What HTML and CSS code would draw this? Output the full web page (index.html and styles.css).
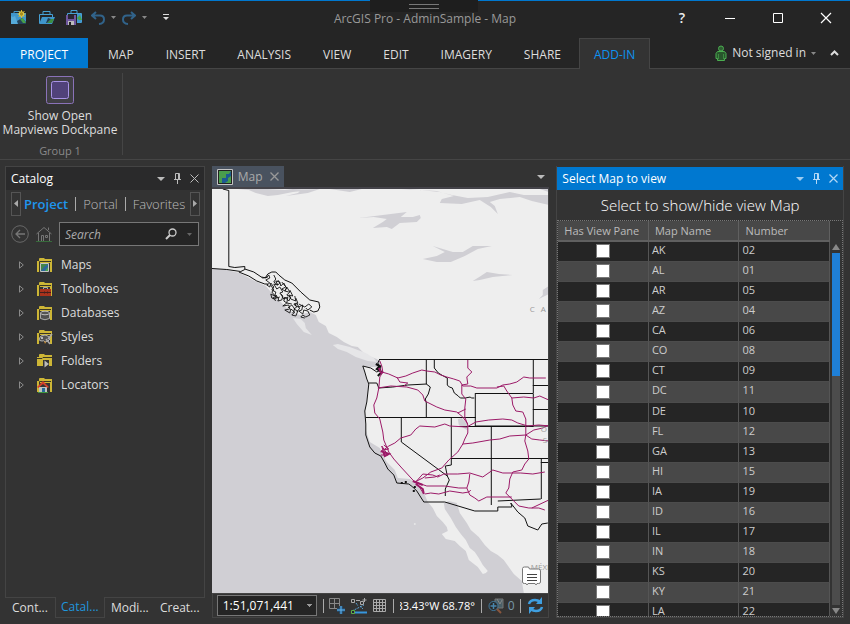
FILE: index.html
```html
<!DOCTYPE html>
<html lang="en">
<head>
<meta charset="utf-8">
<title>ArcGIS Pro - AdminSample - Map</title>
<link rel="stylesheet" href="styles.css">
</head>
<body>
<div class="window">
  <header class="titlebar">
    <div class="grip"></div>
    <div class="quick">
      <button aria-label="New project"><svg width="17" height="16" viewBox="0 0 17 16"><path d="M4 4V1.500h6V4" fill="none" stroke="#3f96cc"/><path d="M1 3h15v11H1z" fill="#3f96cc"/><path d="M1 6l2 1 2-1 3 8H1z" fill="#56abd9"/><path d="M7 11l5-3 4 4v2H8z" fill="#24435a"/><path d="M10 9l3-1 3 5h-3z" fill="#48a04a"/><path d="M11.500 0v8M7.500 4h8M8.500 1l6 6M14.500 1l-6 6" stroke="#d7b52e"/><circle cx="11.500" cy="4" r="2.300" fill="#a88d21" stroke="#ead044"/></svg></button>
      <button aria-label="Open project"><svg width="17" height="16" viewBox="0 0 17 16"><path d="M5 4V1.500h7V4M1.500 13V4.500h13V7" fill="none" stroke="#46a0d4"/><path d="M1 14l3-7h13l-3 7z" fill="#3f96cc"/><path d="M9 13l4-4h3l-2 4z" fill="#3b8f42"/><path d="M10 8l3 1-4 4H8z" fill="#263c4c"/></svg></button>
      <button aria-label="Save project"><svg width="18" height="17" viewBox="0 0 18 17"><path d="M6 4V1.500h6V4M2.500 8V4.500h14v9H12" fill="none" stroke="#46a0d4"/><path d="M12 5h4v8h-4z" fill="#3f96cc"/><path d="M12 9l3-3 2 5h-3z" fill="#48a04a"/><path d="M1 6h10v10H1z" fill="#6f579e"/><path d="M3 6h6v4H3z" fill="#292632"/><path d="M3 12h6v4H3z" fill="#bbb"/><path d="M4 13h2v3H4z" fill="#222"/></svg></button>
      <button aria-label="Undo"><svg width="14" height="14" viewBox="0 0 14 14"><path d="M5 1L1 4.500 5 8M1 4.500h8q4 0 4 4t-5 4.500" fill="none" stroke="#31638a" stroke-width="2"/></svg></button>
      <svg class="tri" width="5" height="3" viewBox="0 0 5 3"><path d="M0 0h5L2.500 3z"/></svg>
      <button aria-label="Redo"><svg width="14" height="14" viewBox="0 0 14 14"><path d="M9 1l4 3.500L9 8M13 4.500H5q-4 0-4 4T6 13" fill="none" stroke="#31638a" stroke-width="2"/></svg></button>
      <svg class="tri" width="5" height="3" viewBox="0 0 5 3"><path d="M0 0h5L2.500 3z"/></svg>
      <button class="customize" aria-label="Customize"><svg width="6" height="7" viewBox="0 0 6 7"><path d="M0 0h6v1H0zM0 3h6L3 6z" fill="#ddd"/></svg></button>
    </div>
    <h1>ArcGIS Pro - AdminSample - Map</h1>
    <div class="winbtns">
      <button class="help" aria-label="Help">?</button>
      <button aria-label="Minimize"><svg width="12" height="12" viewBox="0 0 12 12"><path d="M1 6.500h10" stroke="#fff"/></svg></button>
      <button aria-label="Maximize"><svg width="12" height="12" viewBox="0 0 12 12"><path d="M1.500 1.500h9v9h-9z" fill="none" stroke="#fff"/></svg></button>
      <button aria-label="Close"><svg width="12" height="12" viewBox="0 0 12 12"><path d="M1 1l10 10M11 1L1 11" stroke="#fff" stroke-width="1.200"/></svg></button>
    </div>
  </header>

  <nav class="ribbon-tabs">
    <button class="project">PROJECT</button>
    <button>MAP</button><button>INSERT</button><button>ANALYSIS</button><button>VIEW</button><button>EDIT</button><button>IMAGERY</button><button>SHARE</button>
    <button class="active">ADD-IN</button>
    <div class="account">
      <svg width="12" height="17" viewBox="0 0 12 17"><circle cx="6" cy="3.500" r="2.500" fill="#2f5d33" stroke="#4bae50"/><path d="M2.500 6.500h7l1.500 2v5h-1.500v2h-7v-2H1v-5z" fill="#28562c" stroke="#4bae50"/><path d="M3.500 9v5M8.500 9v5" stroke="#3d8a42"/></svg>
      <button>Not signed in</button>
      <svg class="tri" width="5" height="3" viewBox="0 0 5 3"><path d="M0 0h5L2.500 3z"/></svg>
      <svg class="chev" width="9" height="6" viewBox="0 0 9 6"><path d="M1 5l3.500-3.500L8 5" fill="none" stroke="#ddd" stroke-width="2"/></svg>
    </div>
  </nav>

  <section class="ribbon">
    <div class="group">
      <button class="big">
        <svg width="28" height="28" viewBox="0 0 28 28"><rect x=".5" y=".5" width="27" height="27" rx="2" fill="#403f44" stroke="#8a72b8"/><rect x="5.500" y="5.500" width="17" height="17" rx="2" fill="#51427a" stroke="#a993e6"/></svg>
        <span>Show Open<br>Mapviews Dockpane</span>
      </button>
      <span class="gname">Group 1</span>
    </div>
  </section>

  <main>
    <aside class="catalog">
      <div class="pane">
        <div class="pane-head"><h2>Catalog</h2>
          <svg width="8" height="4" viewBox="0 0 8 4"><path d="M0 0h8L4 4z" fill="#bbb"/></svg>
          <svg width="9" height="11" viewBox="0 0 9 11"><path d="M2.500 6V.5h4V6M1 6.500h7M4.500 7v4M5.500 1v5" fill="none" stroke="#bbb"/></svg>
          <svg width="9" height="9" viewBox="0 0 9 9"><path d="M.5.5l8 8M8.500.5l-8 8" stroke="#bbb"/></svg>
        </div>
        <div class="cat-tabs">
          <button class="arrow" aria-label="Scroll left"><svg width="4" height="7" viewBox="0 0 4 7"><path d="M4 0v7L0 3.500z" fill="#aaa"/></svg></button>
          <a href="#" class="on">Project</a><a href="#">Portal</a><a href="#">Favorites</a>
          <button class="arrow" aria-label="Scroll right"><svg width="4" height="7" viewBox="0 0 4 7"><path d="M0 0v7l4-3.500z" fill="#aaa"/></svg></button>
        </div>
        <div class="cat-search">
          <svg width="18" height="18" viewBox="0 0 18 18"><circle cx="9" cy="9" r="8.300" fill="none" stroke="#686868"/><path d="M14 9H5M9 5L5 9l4 4" fill="none" stroke="#777" stroke-width="1.300"/></svg>
          <svg width="16" height="16" viewBox="0 0 16 16"><path d="M.5 8L8 1.500 15.500 8M2.500 7v8M13.500 7v8M12.500 4V1.500" fill="none" stroke="#777"/><path d="M5.500 15V9.500h2V15M9.500 9.500h2v2h-2z" fill="none" stroke="#777"/><path d="M0 15.500h16" stroke="#376b3b"/></svg>
          <label class="search"><input type="text" placeholder="Search" aria-label="Search">
            <svg width="12" height="12" viewBox="0 0 12 12"><circle cx="7.500" cy="4.500" r="3.500" fill="none" stroke="#ccc" stroke-width="1.300"/><path d="M5 7L1 11" stroke="#ccc" stroke-width="2"/></svg>
            <svg width="5" height="3" viewBox="0 0 5 3"><path d="M0 0h5L2.500 3z" fill="#666"/></svg></label>
        </div>
        <svg class="defs" width="0" height="0"><defs>
          <symbol id="fold" viewBox="0 0 16 16"><path d="M0 15V4h2V2q0-1 1-1h4l1 1h7v13h-2V6H3v9z" fill="#cdb636"/><path d="M2.500 15V4.500H14" fill="none" stroke="#3a3726"/></symbol>
          <symbol id="exp" viewBox="0 0 5 8"><path d="M.5.800v6.400L4.300 4z" fill="none" stroke="#8a8a8a"/></symbol></defs></svg>
        <ul class="tree">
          <li><svg class="ex"><use href="#exp"/></svg><svg class="ic" viewBox="0 0 16 16"><use href="#fold"/><path d="M3.500 6.500h8v8h-8z" fill="#42844a" stroke="#c4c4c4"/><path d="M4 14l3-4 4-3v7z" fill="#2b669b"/><path d="M8 14l3-4v4z" fill="#49a34d"/></svg>Maps</li>
          <li><svg class="ex"><use href="#exp"/></svg><svg class="ic" viewBox="0 0 16 16"><use href="#fold"/><path d="M6.500 9V6.500h4V9" fill="none" stroke="#aaa"/><path d="M3 8h11v7H3z" fill="#a8321c"/><path d="M3 11.500h11M7.500 10.500v2M10.500 10.500v2" stroke="#42201c"/></svg>Toolboxes</li>
          <li><svg class="ex"><use href="#exp"/></svg><svg class="ic" viewBox="0 0 16 16"><use href="#fold"/><path d="M3.500 8v5.500q4.500 2.500 9 0V8" fill="#505050" stroke="#aaa"/><ellipse cx="8" cy="8" rx="4.500" ry="1.800" fill="#555" stroke="#bbb"/></svg>Databases</li>
          <li><svg class="ex"><use href="#exp"/></svg><svg class="ic" viewBox="0 0 16 16"><use href="#fold"/><path d="M2 10q1-4 6-4 5 1 5 4-2 3-5 3-1-2-3-1-3 0-3-2z" fill="#525252" stroke="#b3b3b3"/><path d="M15 5l-4 5M9 10l4 5" stroke="#aaa" stroke-width="1.500"/><path d="M7 12l2 1-1 2z" fill="#d4902e"/><circle cx="5" cy="9" r="1" fill="#ddd"/></svg>Styles</li>
          <li><svg class="ex"><use href="#exp"/></svg><svg class="ic" viewBox="0 0 16 16"><path d="M0 13V4h2V2q0-1 1-1h4l1 1h7v11z" fill="#cdb636"/><path d="M0 5.500h5l1-1h9" fill="none" stroke="#3a3726"/><path d="M6 7h6v9H6z" fill="#333"/><path d="M7.500 7.500v7l4.500-3.500z" fill="#bbb"/></svg>Folders</li>
          <li><svg class="ex"><use href="#exp"/></svg><svg class="ic" viewBox="0 0 16 16"><use href="#fold"/><path d="M2 10h8v5H2z" fill="#bfc2bf"/><path d="M5 11h3v4H5z" fill="#27699a"/><path d="M0 10l6-6 6 6-1.500 1L6 7l-4.500 4z" fill="#d3412c"/><path d="M1 15.500h10" stroke="#3f963f"/></svg>Locators</li>
        </ul>
      </div>
      <div class="bottom-tabs"><button>Cont...</button><button class="on">Catal...</button><button>Modi...</button><button>Creat...</button></div>
    </aside>

    <section class="mapview">
      <div class="doc-tabs">
        <div class="doc-tab"><svg width="16" height="16" viewBox="0 0 16 16"><path d="M.5.5h15v15H.5z" fill="#222" stroke="#c5c5c5"/><path d="M2 2h12v12H2z" fill="#4a9e4c"/><path d="M14 2v5l-3 2v3l-3 2H5V9h4V5h3z" fill="#1d5a91"/><path d="M10 14l4-4v4z" fill="#4a9e4c"/></svg><span>Map</span><button aria-label="Close map"><svg width="9" height="9" viewBox="0 0 9 9"><path d="M.5.5l8 8M8.500.5l-8 8" stroke="#999" stroke-width="1.300"/></svg></button></div>
        <svg width="8" height="4" viewBox="0 0 8 4"><path d="M0 0h8L4 4z" fill="#bbb"/></svg>
      </div>
      <div class="canvas">
        <svg class="map" viewBox="212 189 337 404" preserveAspectRatio="xMidYMid slice" role="img" aria-label="Map of western North America">
          <path d="M212 189h337v404H212z" fill="#eee"/>
          <g fill="#d0cfd4">
            <path d="M212 268L227 270 240 273 255 281 266 286 272 293 280 301 290 311 300 315 310 312 316 315 319 322 326 326 329 333 337 337 344 342 352 346 358 347 366 355 377 359 381 362 379 367 370 367 363 366 365 372 367 380 369 384 367 400 365 411 366 430 370 442 380 448 383 455 387 462 395 470 398 478 410 479 417 484 425 495 428 502 433 508 437 516 443 522 447 527 448 531 442 534 446 539 455 541 460 546 466 551 469 560 478 567 483 574 486 573 488 571 483 565 479 558 475 552 470 548 466 540 461 534 456 527 451 518 445 509 444 503 449 501 457 503 460 513 467 523 471 530 479 537 485 545 491 551 498 555 504 560 509 567 514 574 522 581 524 593H212z"/>
            <path d="M238 189h30l17 1 8-1 20 1-20 2-15 3-10 1-12-3-7-3zM286 196l12-3 4-3 18-1-12 4zM330 189h32l-12 3zM365 189h45l30 3 12 3 16 3 20-1 22-5 14 3 25 0v10l-17-4-12-4-20 2-10 3 5 4 3 8-7-7-11-7-18 4-22-1 2-4 12-3-17-5-35-2zM540 189l9 3v-3z"/>
            <path d="M359 218l24-3 24-3-6 5 12 0 7-2 1 3-4 4-17 1-8 6-5-2-14 1 10-6 4-3-13-2zM423 259l14-3 8-4-12-6 20 6h10l10-6 19 0-14 3-13 7-14 6h-14zM473 281l8-5 6-4 12 2 14 1-20 2-13 3zM549 286l-6 4v5l-4 4 10-5zM458 419l4-1 7 8-2 4-8-5z"/>
          </g>
          <g fill="#e6e6e8"><path d="M293 318l8 1 4 4 1 5 6 7-8-3-7-8zM333 345l5-1 12 3 16 6 8 5 3 4-9-1-12-4-9-5-9-3z"/><circle cx="415" cy="524" r="1"/></g>
          <g fill="none" stroke="#111" stroke-width="1">
            <path d="M223 189l6 1.500v76l6 1 10-1v3l-4 2-14-2-15-1M245 269l9 3 9 6 5-1M239 272l10 4 8 5 8 3h3M266 277l2-3 4-2h4l3 3 6 5 7 3 9 9 9 8 9 2 1 5-2 4-4 1-4-2"/>
            <path stroke-width=".9" d="M262 277l4 1 3-3 1 3-4 2 4 3-3 2 3 2 1-4 3 4-2 3 4 2-1 4-4-2 1 4 4 1 0-4 3 4-1 2 4-1 1-4-3-3 3-1-3-5-3 2-3-5 4 1-2-4 4 1 1 4 3-3 2 4-4 2 3 2 2-4 3 5-3 3 4 2-2 4-4-4-1 4 3 2-4 3 6-1 1 4-5 1 5 3 1-4 4 3-3 3 4 1 2-5-4-2 3-2-3-3 3-1 2 4 4-2-1 5-3 1 4 3 1-4 4 1 2 4-4 2-3-2-2 2 4 1M274 275l2 4-2 3 4 3 2-2-2-3M271 285l3 5-2 2 5 6 3-1M282 282l5 6-2 3 4 1M290 290l3 6-4-1 2 4 5 2-1-5M281 294l3 5 4-2-1 6 5 1M296 298l2 5-3 2 5 3-3 4M288 308l4-3 3 4-2 4M277 296l-4 2 3 3M299 304l6 3 4-3 3 3-4 3-2-2"/>
            <path d="M380 359.500h169M380 359l-2 4 3 7-4 2-6-4-8-2 2 6 2 7 2 5-2 18-2 9 1 13 0 11 4 12 5 6 6 3 4 7 3 6 6 6 3 8 12 1 4 3 4 4 7 11h21l30 9h23v-4h14v-1l-1-3 7 9 7 6 3 8 10 4 4-6 6-1M498 501l43-2M369 383h8l2 5 14-1 15-2 19-1M426.500 359v25l4 3-2 7-3 5 1 4v14M366 417.500h110M434.500 359v9l4 5 5 3 4 2v7l2 2 3 1 2 5 4 3 2 2h5l5-1 1 1h3M475.500 393.500h58v33h-74M533.500 359v34M533 385.500h16M533 409.500h16M475.500 393v33h74M401.500 417v25l46 34M451.500 417v48l-6 1 2 10 2 4-4 9v7M491.500 426v79M451 458.500h98M541.500 458v41M541 462.500h8"/>
            <path stroke-width="2" d="M376 364l4 2-3 3 5 3-4 4M378 370l3-4M401 483h2M405 482h2M414 487h2M413 491h2"/>
          </g>
          <g fill="none" stroke="#9c1a68" stroke-width="1">
            <path d="M380 361l2 5 1 6-3 5-1 11-2 10-3 7 1 8 5 6 3 13 1 8 5 12 5 7 8 9 12 13 5 5 5 8M382 372l7 2 9 4 8-2 7-3 9-3 5 1 8 1 6 3 6 2 7 2 6 2 3 5 8 0 6 2 20 0 6-3 7-1 7-2 7-5 6 1h16M497 387l7-1 3 5 5 7 12-1 10 1 6-2 9 4M512 398l1 7 3 6 7 1 3 7 0 7 0 9-1 6 3 10 1 8-4 5-3 6-9 2-3 7-1 9-3 5 7 7 6 6 10 2 10 0 6 2M532 508l17-8M468 360l0 8 4 4-5 5 1 7-6 1 0 9 4 5-1 9 0 9 3 8 0 8-3 6-2 5-5 8-9 8-7 8-11 4-8 6-8 4M378 388l13-2 16 1 11 3 5 5 2 6 12 6 8 3 12 2 6 5 5 7M397 377l3 5 8 1-4 3M458 413l8-4"/>
            <path d="M381 452l8-6 6-3 6-5 10-3 5-6 4-3 15 1 10-3 5 2 17 1 9-5 13-2 14-1 9 1 6 3 10 3 11-1 11 1M463 444l10-1 17-3 10-1 10-3 16-1 6 4 8 1 9 1M526 435l8-5 9-2 6-3M415 483l8-9 10 1 5 2 6-3 14 0 12-1 13 4 10-7 10 3 18 0 12 1 12-2M415 482l12 4 18 0 14 2 8 0 3 7 5 3 4 3 8-4 25 0M425 494l6-1 8 1 11-3 13 2 6-1 2-2M467 488l2-6 1-8M425 478l10-1 5-2M384 445l5 4-6 1-1-4 6 9-7 0"/>
            <path stroke-width="2" d="M381 451l8 3-4 2-2-5M379 368l3 6M413 481l10 4M416 484l7 5 1 5"/>
          </g>
          <g class="maplabels"><text x="530" y="312">C</text><text x="541" y="312">A</text><text x="541" y="432">O</text><text x="543" y="443">S</text><text x="531" y="570">MÉXI</text></g>
        </svg>
        <button class="note" aria-label="Map notes"><svg width="21" height="20" viewBox="0 0 21 20"><path d="M1.500 2.500q0-1.500 2-1.500h4l1 2h9q2 0 2 2v11q0 1.500-2 1.500H16l-1 1.500-1-1.500H7L6 19l-1-1.500H3.500q-2 0-2-1.500z" fill="#fff" stroke="#777"/><path d="M6 8.500h10M6 11.500h10M6 14.500h10" stroke="#444"/></svg></button>
      </div>
      <div class="status">
        <select aria-label="Scale"><option>1:51,071,441</option></select>
        <i></i>
        <svg width="16" height="16" viewBox="0 0 16 16"><path d="M.5.5h10v10H.5zM5.500 .5v10M.5 5.500h10" fill="none" stroke="#888"/><path d="M8 8h8v8H8z" fill="#333"/><path d="M12 8v8M8 12h8" stroke="#1d5b8d" stroke-width="3"/><path d="M12 8v8M8 12h8" stroke="#6bb5e8"/></svg>
        <svg width="16" height="16" viewBox="0 0 16 16"><path d="M.5 1.500h3v3h-3zM9.500 3.500h3v3h-3zM5 2.500h4M13.500 0v4M11.500 2h4" fill="none" stroke="#aaa"/><path d="M1 13L13 7M5 5l2 3M9 8l3 3" stroke="#5aa5da" stroke-dasharray="2 1"/><path d="M3 14.500h13" stroke="#3796dd" stroke-width="2"/><path d="M.5 12.500h3v3h-3z" fill="#223" stroke="#5fae46"/></svg>
        <svg width="14" height="14" viewBox="0 0 14 14"><path d="M.5.500h12v12H.500zM3.500 0v13M6.500 0v13M9.500 0v13M0 3.500h13M0 6.500h13M0 9.500h13" fill="none" stroke="#aaa"/></svg>
        <i></i>
        <output>33.43°W 68.78°</output>
        <i></i>
        <button class="sel"><svg width="16" height="16" viewBox="0 0 16 16"><path d="M7 1h8v9H7z" fill="#4b6068" stroke="#777"/><path d="M9 1l3 5 2-4" stroke="#888" fill="none"/><circle cx="5.500" cy="8" r="4.500" fill="#292929" stroke="#427a9e"/><path d="M5.500 5v6M2.500 8h6" stroke="#4986ad" stroke-width="1.500"/><path d="M9 11l4 4" stroke="#8a563d" stroke-width="2"/></svg>0</button>
        <i></i>
        <button aria-label="Refresh"><svg width="17" height="17" viewBox="0 0 17 17"><path d="M2 7q1-4 6-4 3 0 5 2M15 10q-1 4-6 4-3 0-5-2" fill="none" stroke="#3f9fe0" stroke-width="2.500"/><path d="M15 0v7H9zM2 17v-7h6z" fill="#3f9fe0"/></svg></button>
      </div>
    </section>

    <section class="select-pane">
      <div class="pane-head"><h2>Select Map to view</h2>
        <svg width="8" height="4" viewBox="0 0 8 4"><path d="M0 0h8L4 4z" fill="#9dccf1"/></svg>
        <svg width="9" height="11" viewBox="0 0 9 11"><path d="M2.500 6V.5h4V6M1 6.500h7M4.500 7v4M5.500 1v5" fill="none" stroke="#b3d8f5"/></svg>
        <svg width="9" height="9" viewBox="0 0 9 9"><path d="M.5.5l8 8M8.500.5l-8 8" stroke="#b3d8f5" stroke-width="1.200"/></svg>
      </div>
      <h3>Select to show/hide view Map</h3>
      <div class="grid">
        <div class="rows">
        <table>
          <thead><tr><th>Has View Pane</th><th>Map Name</th><th>Number</th></tr></thead>
          <tbody>
            <tr><td><input type="checkbox" aria-label="AK"></td><td>AK</td><td>02</td></tr>
            <tr><td><input type="checkbox" aria-label="AL"></td><td>AL</td><td>01</td></tr>
            <tr><td><input type="checkbox" aria-label="AR"></td><td>AR</td><td>05</td></tr>
            <tr><td><input type="checkbox" aria-label="AZ"></td><td>AZ</td><td>04</td></tr>
            <tr><td><input type="checkbox" aria-label="CA"></td><td>CA</td><td>06</td></tr>
            <tr><td><input type="checkbox" aria-label="CO"></td><td>CO</td><td>08</td></tr>
            <tr><td><input type="checkbox" aria-label="CT"></td><td>CT</td><td>09</td></tr>
            <tr><td><input type="checkbox" aria-label="DC"></td><td>DC</td><td>11</td></tr>
            <tr><td><input type="checkbox" aria-label="DE"></td><td>DE</td><td>10</td></tr>
            <tr><td><input type="checkbox" aria-label="FL"></td><td>FL</td><td>12</td></tr>
            <tr><td><input type="checkbox" aria-label="GA"></td><td>GA</td><td>13</td></tr>
            <tr><td><input type="checkbox" aria-label="HI"></td><td>HI</td><td>15</td></tr>
            <tr><td><input type="checkbox" aria-label="IA"></td><td>IA</td><td>19</td></tr>
            <tr><td><input type="checkbox" aria-label="ID"></td><td>ID</td><td>16</td></tr>
            <tr><td><input type="checkbox" aria-label="IL"></td><td>IL</td><td>17</td></tr>
            <tr><td><input type="checkbox" aria-label="IN"></td><td>IN</td><td>18</td></tr>
            <tr><td><input type="checkbox" aria-label="KS"></td><td>KS</td><td>20</td></tr>
            <tr><td><input type="checkbox" aria-label="KY"></td><td>KY</td><td>21</td></tr>
            <tr><td><input type="checkbox" aria-label="LA"></td><td>LA</td><td>22</td></tr>
          </tbody>
        </table>
        </div>
        <div class="scroll">
          <svg width="8" height="6" viewBox="0 0 8 6"><path d="M0 6h8L4 0z" fill="#888"/></svg>
          <div class="track"><div class="thumb"></div></div>
          <svg width="8" height="6" viewBox="0 0 8 6"><path d="M0 0h8L4 6z" fill="#888"/></svg>
        </div>
      </div>
    </section>
  </main>
</div>
</body>
</html>
```
FILE: styles.css
```css
* { box-sizing: border-box; }
body { margin: 0; background: #333; color: #ddd; font: 12px/16px "Open Sans", "Noto Sans", sans-serif; }
button { background: none; border: 0; padding: 0; margin: 0; color: inherit; font: inherit; display: flex; align-items: center; justify-content: center; white-space: nowrap; }
h1, h2, h3, ul { margin: 0; padding: 0; font-weight: 400; font-size: 12px; }
svg { display: block; flex: none; }
a { color: inherit; text-decoration: none; }

.window { height: 100vh; display: flex; flex-direction: column; }

.titlebar { position: relative; flex: none; height: 38px; display: grid; grid-template-columns: 1fr auto 1fr; align-items: center; background: #252525; border-top: 1px solid #0078d0; padding: 0 18px 4px; }
.titlebar h1 { color: #999; padding-top: 2px; }
.grip { position: absolute; top: -1px; left: calc(50% - 55px); width: 108px; height: 12px; background: #1e1e1e; padding-top: 4px; }
.grip::after { content: ""; display: block; margin: 0 auto; width: 30px; height: 3px; border: solid #777; border-width: 1px 0; }
.quick { display: flex; align-items: center; gap: 6px; margin-left: -11px; }
.quick button:nth-of-type(-n+3) { width: 22px; }
.tri { fill: #888; }
.customize { margin-left: 10px; }
.winbtns { display: flex; justify-content: flex-end; gap: 36px; }
.help { width: 12px; font-size: 14px; font-weight: 600; color: #eee; }

.ribbon-tabs { flex: none; height: 31px; display: flex; background: #252525; border-bottom: 1px solid #454545; }
.ribbon-tabs > button { padding: 3px 16px 0; }
.ribbon-tabs > .project { background: #0078d0; color: #fff; padding: 3px 20px 0; margin-right: 4px; }
.ribbon-tabs > .active { background: #333; border: 1px solid #454545; border-bottom: 0; color: #0d93f2; margin: 0 0 -1px 2px; padding: 2px 14px 0; }
.account { margin-left: auto; display: flex; align-items: center; gap: 5px; padding-right: 11px; }
.account button { line-height: 28px; }
.chev { margin-left: 9px; }

.ribbon { flex: none; height: 91px; border-bottom: 1px solid #454545; padding: 4px 0; display: flex; }
.group { width: 123px; border-right: 1px solid #454545; display: flex; flex-direction: column; align-items: center; padding: 3px 2px 0 0; }
.big { flex-direction: column; gap: 5px; line-height: 14px; }
.gname { color: #8a8a8a; font-size: 11px; margin-top: 6px; }

main { flex: 1; min-height: 0; display: grid; grid-template-columns: 200fr 338fr 288fr; gap: 7px; padding: 6px 6px 6px 5px; }
main > * { min-width: 0; min-height: 0; display: flex; flex-direction: column; }
.pane-head { flex: none; height: 24px; display: flex; align-items: center; gap: 8px; padding: 0 5px; background: #2a2a2b; color: #fff; }
.pane-head h2 { flex: 1; }

.pane { flex: 1; min-height: 0; border: 1px solid #444; }
.pane .pane-head { height: 23px; }
.cat-tabs { height: 25px; display: flex; align-items: center; margin: 1px 4px 0 5px; font-size: 13px; }
.cat-tabs a { padding: 0 7px; border-left: 1px solid #aaa; line-height: 14px; color: #bbb; font-weight: 300; }
.cat-tabs a.on { border: 0; padding-left: 3px; color: #1f96ee; font-weight: 600; }
.cat-tabs a:nth-of-type(3) { flex: 1; min-width: 0; padding-right: 0; }
.arrow { flex: none; width: 10px; height: 24px; border: 1px solid #555; }
.cat-search { display: flex; align-items: center; gap: 7px; padding: 6px 5px; }
.search { flex: 1; min-width: 0; height: 24px; display: flex; align-items: center; gap: 10px; background: #252525; border: 1px solid #777; padding: 0 6px 0 5px; }
.search input { flex: 1; min-width: 0; background: none; border: 0; padding: 0; font: italic 12px "Open Sans", sans-serif; color: #ddd; }
.search input::placeholder { color: #aaa; opacity: 1; }
.defs { position: absolute; }
.tree { list-style: none; padding-top: 1px; }
.tree li { height: 24px; display: flex; align-items: center; padding-left: 13px; }
.ex { width: 5px; height: 8px; margin-right: 13px; }
.ic { width: 16px; height: 16px; margin-right: 8px; }
.bottom-tabs { flex: none; height: 20px; display: grid; grid-template-columns: repeat(4, 1fr); }
.bottom-tabs .on { color: #1f96dd; border: 1px solid #444; border-top: 0; background: #333; margin-top: -1px; }

.doc-tabs { flex: none; height: 23px; display: flex; align-items: center; justify-content: space-between; border-bottom: 2px solid #444349; padding-right: 4px; }
.doc-tab { height: 21px; display: flex; align-items: center; gap: 5px; padding: 0 5px; background: #49525f; color: #aaa; }
.doc-tab button { margin-left: 2px; }
.canvas { position: relative; flex: 1; min-height: 0; border-right: 1px solid #444; }
.map { width: 100%; height: 100%; }
.maplabels { font: 8px "Open Sans", sans-serif; fill: #999; }
.note { position: absolute; right: 6px; bottom: 7px; }
.status { flex: none; height: 25px; display: flex; align-items: center; justify-content: space-between; border: 1px solid #444; padding: 0 4px; color: #fff; }
.status select { appearance: none; width: 100px; height: 21px; border: 1px solid #777; border-radius: 0; padding: 0 5px; color: #fff; font: inherit; background: linear-gradient(#999, #999) right 4px top 8px / 5px 1px no-repeat, linear-gradient(#999, #999) right 5px top 9px / 3px 1px no-repeat, linear-gradient(#999, #999) right 6px top 10px / 1px 1px no-repeat, #252525; }
.status i { width: 1px; height: 14px; background: #aaa; }
.status output { width: 75px; overflow: hidden; direction: rtl; white-space: nowrap; font-size: 11px; }
.sel { gap: 4px; color: #7898a8; }

.select-pane { border: 1px solid #444; border-top: 0; }
.select-pane .pane-head { background: #0078d0; height: 23px; margin-top: 1px; }
.select-pane h3 { font-size: 15px; font-weight: 300; line-height: 20px; padding: 5px 0; text-align: center; color: #fff; }
.grid { flex: 1; min-height: 0; display: flex; border: 1px dotted #777; }
.rows { flex: 1; min-width: 0; overflow: hidden; }
table { width: 100%; table-layout: fixed; border-collapse: separate; border-spacing: 0; }
th { height: 21px; padding: 0 6px; text-align: left; font-weight: 400; font-size: 11px; color: #bbb; background: #484848; border-right: 1px solid #606060; border-bottom: 2px solid #606060; }
td { height: 20px; padding: 0 3px 3px; font-size: 11px; line-height: 16px; color: #ccc; border-right: 1px solid #555; border-bottom: 1px solid #4c4c4c; background: #252525; vertical-align: top; }
tr:nth-child(even) td { background: #484848; }
td:first-child { text-align: center; }
td input { appearance: none; width: 14px; height: 14px; margin: 0; border: 1px solid #777; background: #fff; vertical-align: middle; }
.scroll { flex: none; width: 12px; display: flex; flex-direction: column; align-items: center; gap: 3px; padding: 23px 0 2px; }
.track { flex: 1; width: 8px; background: #4c4c4c; }
.thumb { height: 35%; background: #1f80d8; }
```
